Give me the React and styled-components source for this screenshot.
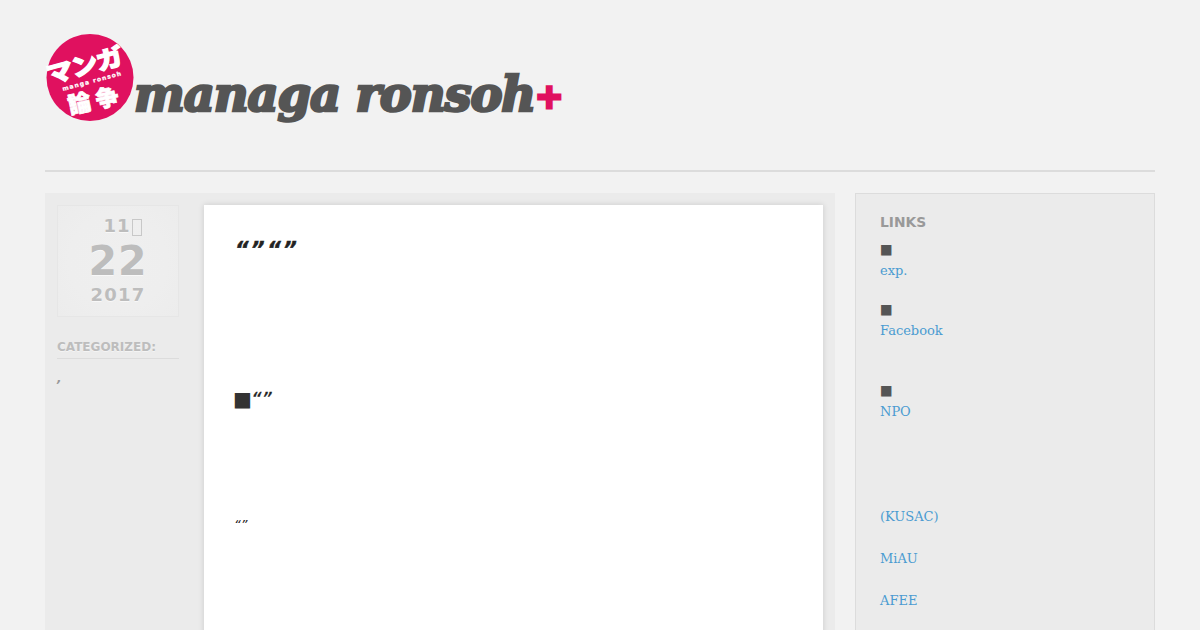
import React from "react";
import styled, { createGlobalStyle } from "styled-components";

const Global = createGlobalStyle`
  html, body { margin: 0; padding: 0; height: 630px; overflow: hidden; background: #f2f2f2; }
  body { font-family: "DejaVu Sans", sans-serif; color: #555; }
`;
const Page = styled.div`
  height: 630px; overflow: hidden; padding: 34px 45px 0; box-sizing: border-box;
`;
const Header = styled.header`
  display: flex; align-items: flex-start; height: 136px; border-bottom: 2px solid #dcdcdc;
`;
const Wordmark = styled.div`
  font-family: "DejaVu Serif", serif; font-weight: 700; font-style: italic; font-size: 48px;
  line-height: 56px; margin: 32px 0 0 -1px; color: #555; white-space: nowrap;
  letter-spacing: -1.1px; -webkit-text-stroke: 2.6px #555;
`;
const Plus = styled.span`
  color: #e0115f; -webkit-text-stroke: 3px #e0115f; font-style: normal; font-family: "DejaVu Sans", sans-serif;
  font-size: 34px; vertical-align: 3px;
`;
const Columns = styled.div`
  display: flex; gap: 20px; margin-top: 21px; align-items: stretch; height: 500px;
`;
const Main = styled.main`
  width: 790px; background: #ebebeb; padding: 12px; box-sizing: border-box; display: flex; gap: 25px; flex: none;
`;
const Meta = styled.div`
  width: 122px; flex: none;
`;
const DateBox = styled.div`
  height: 112px; box-sizing: border-box; border: 1px solid #e6e6e6; background: radial-gradient(circle, #efefef 0%, #eeeeee 60%, #ececec 100%);
  display: flex; flex-direction: column; align-items: center; color: #bdbdbd; font-weight: 700;
  text-shadow: 0 1px 0 #f8f8f8;
`;
const Month = styled.div`
  font-size: 18px; line-height: 22px; letter-spacing: 1px; margin-top: 9px; display: flex; align-items: center; padding-left: 9px;
`;
const Tofu = styled.span`
  display: inline-block; width: 8px; height: 15px; border: 1px solid #c8c8c8; margin-left: 1px; margin-top: 2px;
`;
const Day = styled.div`
  font-size: 41px; line-height: 48px; letter-spacing: 1px;
`;
const Year = styled.div`
  font-size: 18px; line-height: 20px; letter-spacing: 1.2px;
`;
const CatLabel = styled.div`
  margin-top: 22px; font-size: 12px; line-height: 16px; font-weight: 700; color: #bdbdbd; padding-bottom: 3px;
  border-bottom: 1px solid #dcdcdc; text-shadow: 0 1px 0 #f4f4f4;
`;
const Comma = styled.div`
  margin-top: 10px; font-size: 12px; line-height: 18px; color: #999; font-weight: 700; font-style: italic;
`;
const Article = styled.article`
  flex: 1; background: #fff; box-shadow: 0 0 6px rgba(0,0,0,.14); padding: 0 31px; color: #222; height: 600px;
`;
const Title = styled.h1`
  margin: 30px 0 0; font-size: 21px; line-height: 30px; font-weight: 700; font-style: italic; letter-spacing: 2.6px;
  -webkit-text-stroke: .5px #222;
`;
const Sub = styled.h2`
  margin: 119px 0 0; font-size: 20px; line-height: 30px; font-weight: 400; font-style: italic; white-space: nowrap;
  -webkit-text-stroke: .3px #222;
`;
const Square = styled.span`
  font-style: normal; color: #333; margin-left: -2px; margin-right: -1px; -webkit-text-stroke: 0;
`;
const Small = styled.p`
  margin: 101px 0 0 -1px; font-size: 13px; line-height: 20px; font-style: italic;
`;
const Side = styled.aside`
  width: 300px; box-sizing: border-box; background: #ebebeb; border: 1px solid #dcdcdc; padding: 20px 24px; flex: none;
`;
const SideTitle = styled.div`
  font-size: 13.8px; line-height: 17px; font-weight: 700; color: #999;
`;
const Bullet = styled.div`
  margin-top: ${p => p.$top}px; font-size: 13.5px; line-height: 20px; color: #555;
`;
const Link = styled.a`
  display: block; margin-top: ${p => p.$top || 0}px; font-family: "DejaVu Serif", serif; font-size: 13px; line-height: 20px; color: #4a9bd1; text-decoration: none;
`;
const LogoMark = styled.svg`
  flex: none; overflow: visible;
`;

const Logo = () => (
  <LogoMark width="90" height="88" viewBox="0 0 90 88">
    <circle cx="45" cy="43.5" r="43.5" fill="#e0115f" />
    <g fill="#fff" fontFamily="'Noto Sans CJK JP', sans-serif" fontWeight="900" stroke="#fff">
      <text transform="translate(4 50) rotate(-15) scale(1.12 1)" fontSize="24" strokeWidth="1.2" letterSpacing="-1">マンガ</text>
      <text transform="translate(18 57) rotate(-15)" fontSize="6" strokeWidth=".25" fontFamily="'DejaVu Sans', sans-serif" letterSpacing="1.1">manga ronsoh</text>
      <text transform="translate(25 80) rotate(-12)" fontSize="23" strokeWidth=".7" letterSpacing="5">論争</text>
    </g>
  </LogoMark>
);

export default function App() {
  return (
    <Page>
      <Global />
      <Header>
        <Logo />
        <Wordmark>managa ronsoh<Plus>+</Plus></Wordmark>
      </Header>
      <Columns>
        <Main>
          <Meta>
            <DateBox>
              <Month>11<Tofu /></Month>
              <Day>22</Day>
              <Year>2017</Year>
            </DateBox>
            <CatLabel>CATEGORIZED:</CatLabel>
            <Comma>,</Comma>
          </Meta>
          <Article>
            <Title>“”“”</Title>
            <Sub><Square>■</Square>“”</Sub>
            <Small>“”</Small>
          </Article>
        </Main>
        <Side>
          <SideTitle>LINKS</SideTitle>
          <Bullet $top={8}>■</Bullet>
          <Link $top={2}>exp.</Link>
          <Bullet $top={18}>■</Bullet>
          <Link $top={2}>Facebook</Link>
          <Bullet $top={39}>■</Bullet>
          <Link $top={2}>NPO</Link>
          <Link $top={85}>(KUSAC)</Link>
          <Link $top={22}>MiAU</Link>
          <Link $top={22}>AFEE</Link>
        </Side>
      </Columns>
    </Page>
  );
}
